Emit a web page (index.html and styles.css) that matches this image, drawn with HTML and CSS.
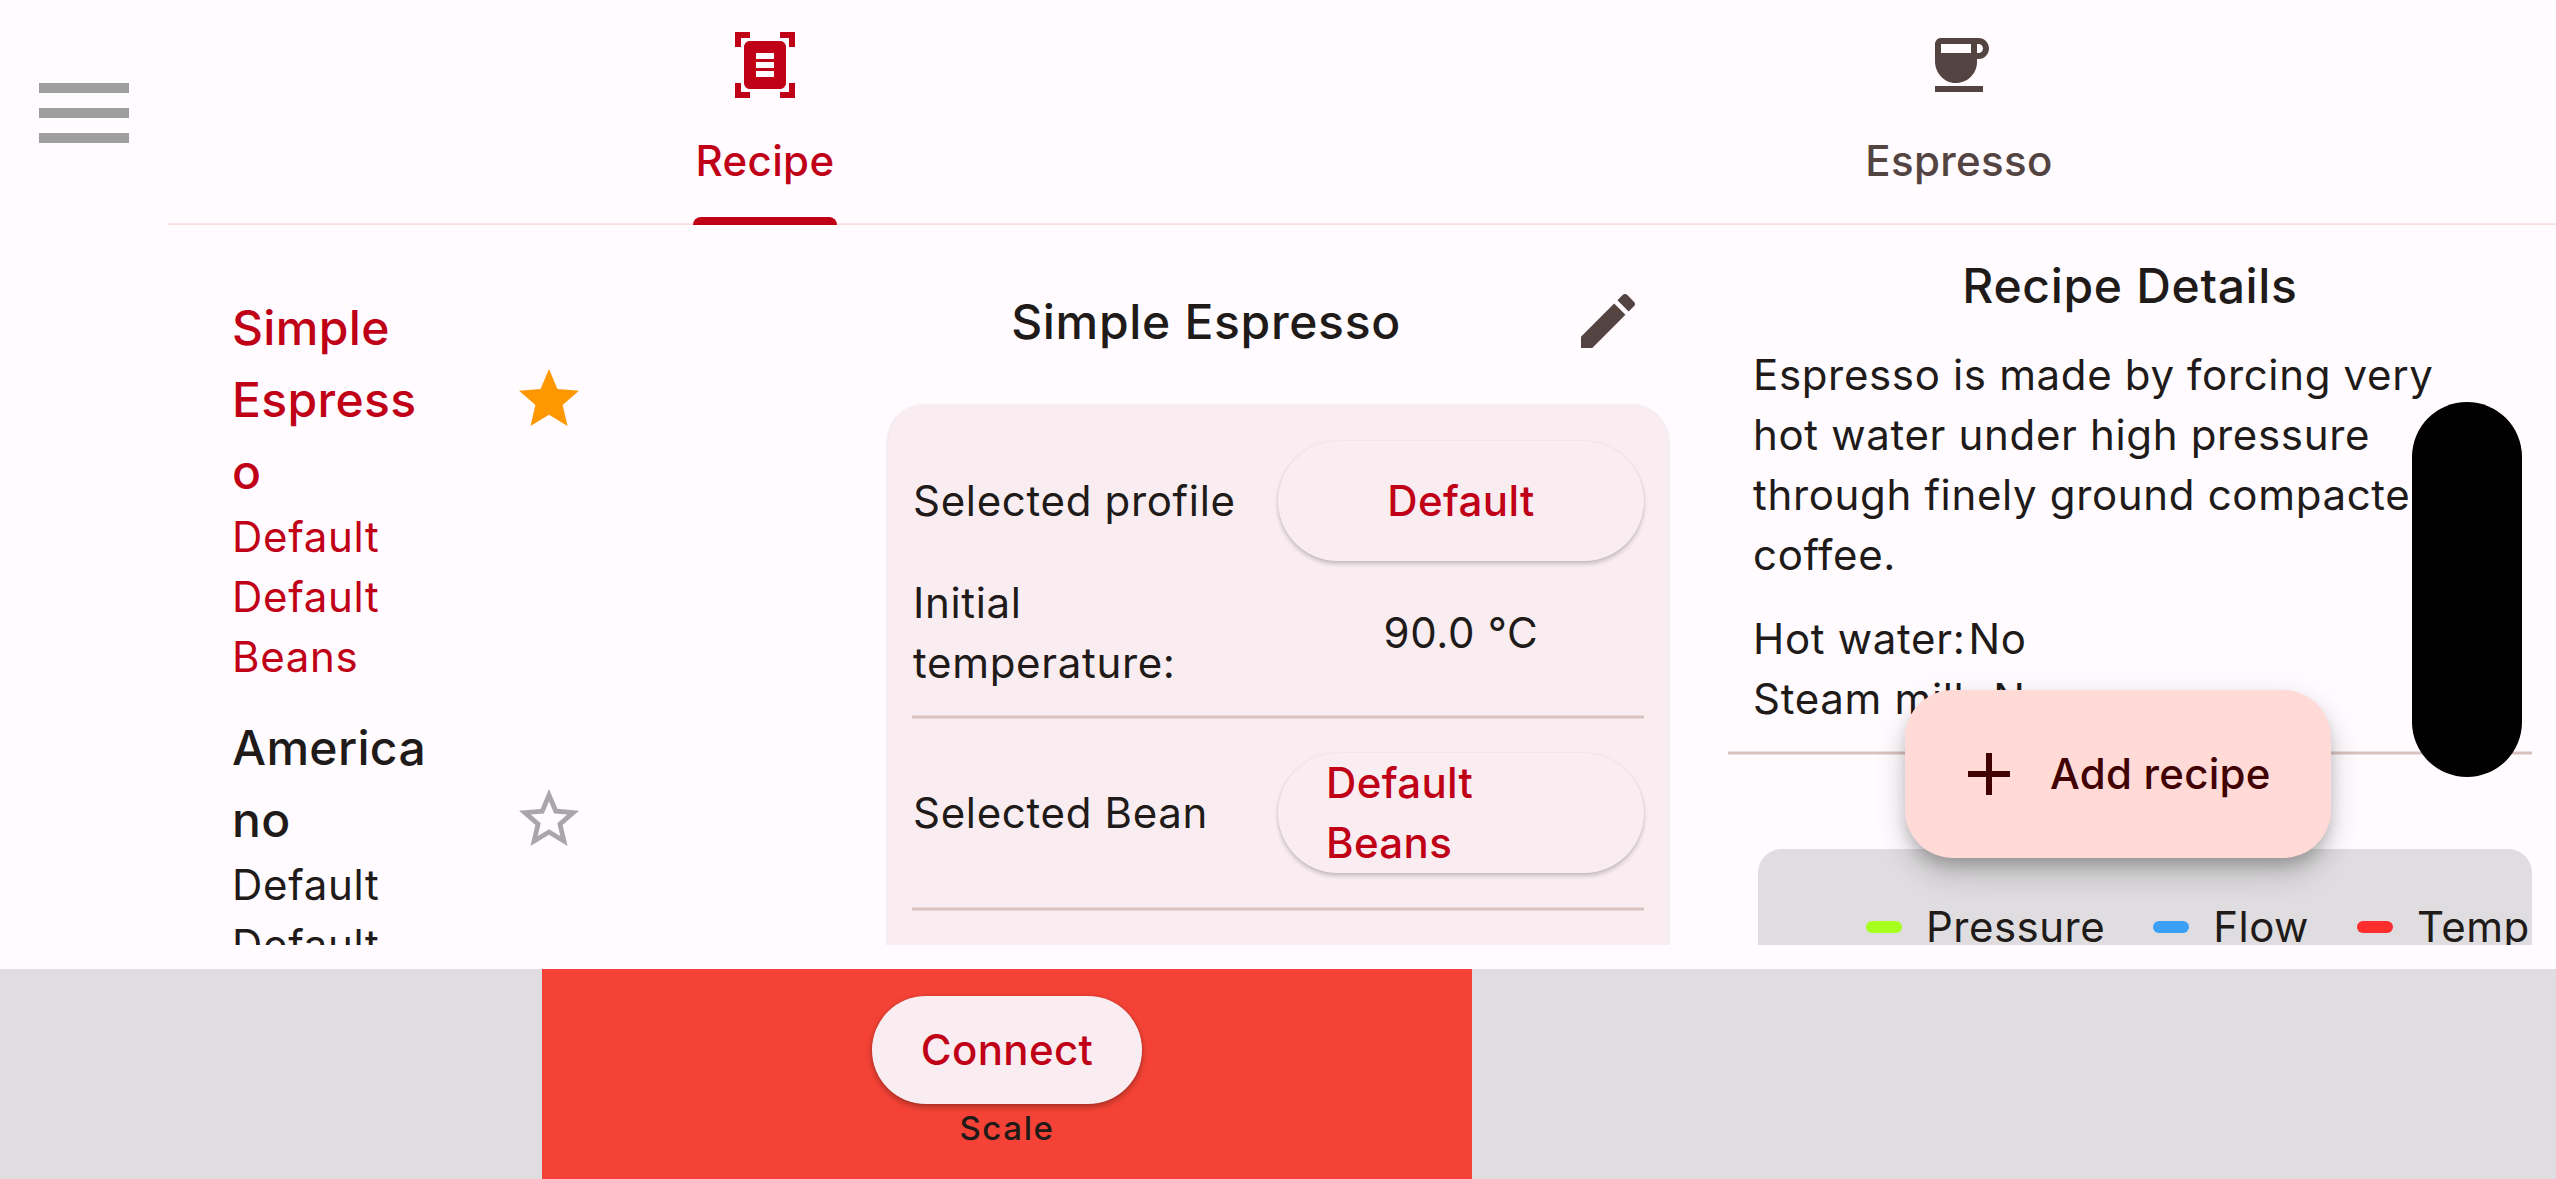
FILE: index.html
```html
<!DOCTYPE html>
<html lang="en">
<head>
<meta charset="utf-8">
<title>Recipes</title>
<link rel="stylesheet" href="styles.css">
</head>
<body>
<div class="screen">
  <div class="main">
    <nav class="rail">
      <button class="menu" aria-label="Menu"><span></span><span></span><span></span></button>
    </nav>
    <div class="page">
      <header class="tabs">
        <div class="tab tab-active">
          <svg class="icon" viewBox="0 0 24 24"><path d="M7 3H4v3H2V1h5v2zm15 3V1h-5v2h3v3h2zM7 21H4v-3H2v5h5v-2zm13-3v3h-3v2h5v-5h-2zm-1 0c0 1.100-.9 2-2 2H7c-1.100 0-2-.9-2-2V6c0-1.100.9-2 2-2h10c1.100 0 2 .9 2 2v12zM15 8H9v2h6V8zm0 3H9v2h6v-2zm0 3H9v2h6v-2z" fill-rule="evenodd"/></svg>
          <span class="tab-label">Recipe</span>
        </div>
        <div class="tab">
          <svg class="icon" viewBox="0 0 24 24"><path d="M18.5 3H6c-1.100 0-2 .9-2 2v5.710c0 3.830 2.950 7.180 6.780 7.290 3.960.12 7.220-3.060 7.220-7v-1h.5c1.930 0 3.500-1.570 3.500-3.500S20.430 3 18.500 3zM16 5v3H6V5h10zm2.500 3H18V5h.5c.83 0 1.500.67 1.500 1.500S19.330 8 18.500 8zM4 19h16v2H4v-2z"/></svg>
          <span class="tab-label">Espresso</span>
        </div>
      </header>
      <main class="content">
        <section class="list">
          <article class="recipe recipe-selected">
            <div class="recipe-text">
              <h3>Simple Espresso</h3>
              <p>Default</p>
              <p>Default Beans</p>
            </div>
            <svg class="icon star star-on" viewBox="0 0 24 24"><path d="M12 17.270 18.180 21l-1.640-7.030L22 9.240l-7.190-.61L12 2 9.190 8.630 2 9.240l5.460 4.730L5.820 21z"/></svg>
          </article>
          <article class="recipe">
            <div class="recipe-text">
              <h3>Americano</h3>
              <p>Default</p>
              <p>Default</p>
            </div>
            <svg class="icon star" viewBox="0 0 24 24"><path d="M22 9.240l-7.190-.62L12 2 9.190 8.630 2 9.240l5.460 4.730L5.820 21 12 17.270 18.180 21l-1.630-7.030L22 9.240zM12 15.400l-3.760 2.270 1-4.280-3.320-2.880 4.380-.38L12 6.100l1.710 4.040 4.380.38-3.320 2.880 1 4.280L12 15.400z"/></svg>
          </article>
        </section>
        <section class="settings">
          <div class="settings-head">
            <h2>Simple Espresso</h2>
            <svg class="icon edit" viewBox="0 0 24 24"><path d="M3 17.250V21h3.750L17.810 9.940l-3.750-3.750L3 17.250zM20.710 7.040c.39-.39.39-1.020 0-1.410l-2.340-2.340c-.39-.39-1.020-.39-1.410 0l-1.830 1.830 3.750 3.750 1.830-1.830z"/></svg>
          </div>
          <div class="card">
            <div class="row row-button">
              <span class="row-label">Selected profile</span>
              <button class="pill">Default</button>
            </div>
            <div class="row row-value">
              <span class="row-label">Initial temperature:</span>
              <span class="value">90.0 °C</span>
            </div>
            <hr>
            <div class="row row-button">
              <span class="row-label">Selected Bean</span>
              <button class="pill"><span>Default Beans</span></button>
            </div>
            <hr>
          </div>
        </section>
        <section class="details">
          <h2>Recipe Details</h2>
          <p class="description">Espresso is made by forcing very hot water under high pressure through finely ground compacted coffee.</p>
          <dl class="facts">
            <div><dt>Hot water:</dt><dd>No</dd></div>
            <div><dt>Steam milk:</dt><dd>No</dd></div>
          </dl>
          <hr>
          <div class="graph">
            <span class="key key-pressure">Pressure</span>
            <span class="key key-flow">Flow</span>
            <span class="key key-temp">Temp</span>
          </div>
        </section>
      </main>
    </div>
  </div>
  <footer class="devices">
    <div class="device">
      <button class="connect">Connect</button>
      <span class="device-name">Scale</span>
    </div>
  </footer>
  <button class="fab">
    <svg class="icon" viewBox="0 0 24 24"><path d="M19 13h-6v6h-2v-6H5v-2h6V5h2v6h6v2z"/></svg>
    <span>Add recipe</span>
  </button>
  <div class="island"></div>
</div>
</body>
</html>
```
FILE: styles.css
```css
* {
  box-sizing: border-box;
}

body {
  margin: 0;
  color: #201a19;
  background: #fffbff;
  font: 400 42px/60px Inter, "Liberation Sans", sans-serif;
  font-feature-settings: "calt" 0;
  letter-spacing: 0.68px;
}

h2, h3, p, dl, dd {
  margin: 0;
}

h2, h3 {
  font-size: 48px;
  line-height: 72px;
  font-weight: 500;
}

h2 {
  letter-spacing: 0.68px;
  text-align: center;
}

h3 {
  margin-bottom: -1px;
  letter-spacing: 0.35px;
  overflow-wrap: anywhere;
}

button {
  border: 0;
  padding: 0;
  font: inherit;
  font-weight: 500;
  letter-spacing: 0.35px;
}

hr {
  flex: none;
  width: 100%;
  height: 4px;
  margin: 22px 0;
  border: 0;
  background: linear-gradient(rgba(216, 194, 191, 0.5) 1px, #d8c2bf 1px, #d8c2bf 3px, rgba(216, 194, 191, 0.5) 3px);
}

.icon {
  flex: none;
  display: block;
  width: 72px;
  height: 72px;
  fill: currentColor;
}

.screen {
  position: relative;
  display: flex;
  flex-direction: column;
  width: 2556px;
  height: 1179px;
  overflow: hidden;
}

.main {
  display: grid;
  grid-template-columns: 168px 1fr;
  height: 969px;
  padding-bottom: 24px;
}

.rail {
  padding: 83px 39px;
}

.menu {
  display: flex;
  flex-direction: column;
  gap: 15px;
  width: 90px;
  background: none;
}

.menu span {
  height: 10px;
  background: #9e9e9e;
}

.page {
  display: flex;
  flex-direction: column;
  height: 945px;
}

/* Tab bar */
.tabs {
  flex: none;
  display: grid;
  grid-template-columns: 1fr 1fr;
  height: 225px;
  background: linear-gradient(#fbe9ea, #f5dddb) bottom / 100% 2px no-repeat;
}

.tab {
  display: flex;
  flex-direction: column;
  align-items: center;
  padding-top: 29px;
  color: #534341;
}

.tab-active {
  color: #c00016;
}

.tab-label {
  display: flex;
  flex-direction: column;
  height: 94px;
  margin-top: 30px;
  font-weight: 500;
  letter-spacing: 0.35px;
}

.tab-active .tab-label::after {
  content: "";
  height: 8px;
  margin: auto -3px 0;
  border-radius: 9px 9px 0 0;
  background: currentColor;
}

.content {
  display: grid;
  grid-template-columns: 720px 780px 864px;
  height: 720px;
  overflow: hidden;
}

/* Recipe list */
.list {
  display: flex;
  flex-direction: column;
  gap: 25px;
  padding: 67px 0 0 64px;
}

.recipe {
  display: flex;
  gap: 77px;
}

.recipe-text {
  width: 204px;
}

.recipe-selected {
  color: #c00016;
}

.star {
  margin-top: 71px;
  color: #aaa5a9;
}

.star-on {
  color: #ff9800;
}

/* Recipe settings */
.settings {
  padding-top: 12px;
}

.settings-head {
  display: grid;
  grid-template-columns: 636px 72px;
  column-gap: 48px;
  align-items: center;
  height: 168px;
}

.settings-head h2 {
  padding-top: 2px;
}

.edit {
  color: #534341;
}

.card {
  height: 620px;
  padding: 24px;
  border-radius: 36px;
  background: #f9edf1;
  box-shadow: 0 3px 4px rgba(0, 0, 0, 0.06), 0 0 3px rgba(0, 0, 0, 0.12);
}

.row {
  display: grid;
  grid-template-columns: 366px 366px;
  align-items: center;
}

.row-button {
  height: 144px;
}

.row-value {
  height: 120px;
}

.row-label {
  padding-left: 1px;
}

.value {
  text-align: center;
}

.pill {
  display: flex;
  align-items: center;
  justify-content: center;
  height: 120px;
  padding: 0 48px;
  border-radius: 60px;
  color: #c00016;
  background: #f9edf1;
  text-align: left;
  box-shadow: 0 3px 4px rgba(0, 0, 0, 0.2), 0 0 2px rgba(0, 0, 0, 0.08);
}

/* Recipe details */
.details {
  margin-left: 60px;
  width: 804px;
  padding-top: 25px;
}

.description {
  margin-top: 23px;
  padding: 0 24px 0 25px;
  letter-spacing: 0.66px;
}

.facts {
  padding: 24px 0 0 25px;
}

.facts div {
  display: flex;
  gap: 3px;
}

.graph {
  display: flex;
  gap: 48px;
  height: 300px;
  margin: 94px 0 0 30px;
  padding: 48px 0 0 108px;
  border-radius: 24px;
  background: #dfdddf;
  white-space: nowrap;
}

.details hr {
  margin-bottom: 0;
}

.key {
  display: flex;
  align-items: center;
  gap: 24px;
  height: 60px;
  letter-spacing: 0.5px;
}

.key::before {
  content: "";
  width: 36px;
  height: 12px;
  border-radius: 6px;
  background: currentColor;
}

.key-pressure::before {
  background: #a6ff1c;
}

.key-flow::before {
  background: #3aa0f5;
}

.key-temp::before {
  background: #fc2d2d;
}

/* Device bar */
.devices {
  display: flex;
  height: 210px;
  padding-left: 542px;
  background: #dfdddf;
}

.device {
  display: flex;
  flex-direction: column;
  align-items: center;
  width: 930px;
  padding-top: 27px;
  background: #f44336;
}

.connect {
  width: 270px;
  height: 108px;
  border-radius: 54px;
  color: #c00016;
  background: #f9edf1;
  box-shadow: 0 3px 6px rgba(0, 0, 0, 0.3), 0 0 3px rgba(0, 0, 0, 0.12);
}

.device-name {
  font-size: 33px;
  line-height: 48px;
  font-weight: 500;
  letter-spacing: 1.6px;
}

/* Floating elements */
.fab {
  position: absolute;
  left: 1905px;
  top: 690px;
  display: flex;
  align-items: center;
  gap: 25px;
  width: 426px;
  height: 168px;
  padding-left: 48px;
  border-radius: 48px;
  color: #410002;
  background: #ffdad6;
  letter-spacing: 0.25px;
  box-shadow: 0 9px 15px -3px rgba(0, 0, 0, 0.2), 0 18px 30px rgba(0, 0, 0, 0.14), 0 3px 40px rgba(0, 0, 0, 0.06);
}

.island {
  position: absolute;
  left: 2412px;
  top: 402px;
  width: 110px;
  height: 375px;
  border-radius: 55px;
  background: #000;
}
```
